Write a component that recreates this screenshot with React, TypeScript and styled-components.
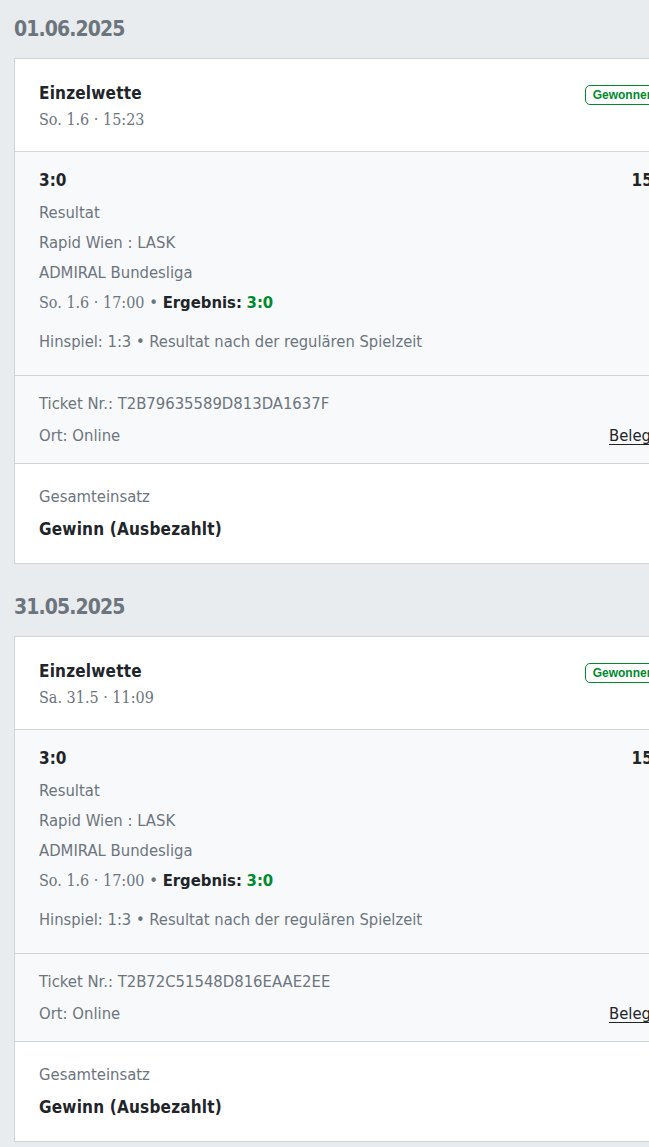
import React from 'react'
import styled, { createGlobalStyle } from 'styled-components'

const GlobalStyle = createGlobalStyle`
    html, body {
        margin: 0;
        padding: 0;
        background: #e9ecef;
        overflow: hidden;
    }
    body {
        font-family: "DejaVu Sans Condensed", "Roboto", sans-serif;
        color: #212529;
    }
`

const Page = styled.div`
    width: 740px;
    padding: 0 14px;
`

const DayHeading = styled.h2`
    margin: 0;
    height: 58px;
    display: flex;
    align-items: center;
    font-size: 21px;
    font-weight: 700;
    letter-spacing: -0.9px;
    color: #6c757d;
    box-sizing: border-box;
`

const DayGroup = styled.section`
    & + & {
        margin-top: 14px;
    }
`

const Card = styled.div`
    width: 694px;
    background: #fff;
    border: 1px solid #ced4da;
`

const Head = styled.div`
    display: flex;
    justify-content: space-between;
    align-items: flex-start;
    padding: 22px 24px 20px;
    border-bottom: 1px solid #ced4da;
`

const Title = styled.div`
    font-size: 17px;
    font-weight: 700;
    line-height: 24px;
    letter-spacing: 0.2px;
`

const Stamp = styled.div`
    margin-top: 4px;
    font-family: "DejaVu Serif Condensed", "Liberation Serif", serif;
    font-size: 16px;
    line-height: 22px;
    color: #6c757d;
`

const Badge = styled.span`
    margin-top: 4px;
    margin-right: 23px;
    font-family: "Liberation Sans", Arial, sans-serif;
    font-size: 12px;
    font-weight: 700;
    line-height: 18px;
    padding: 0 7px;
    color: #008a2e;
    border: 1px solid #008a2e;
    border-radius: 5px;
`

const Section = styled.div<{ $tone: 'light' | 'white'; $pad: string }>`
    padding: ${p => p.$pad};
    background: ${p => (p.$tone === 'light' ? '#f8f9fa' : '#fff')};
    & + & {
        border-top: 1px solid #ced4da;
    }
`

const Row = styled.div`
    display: flex;
    justify-content: space-between;
    align-items: baseline;
`

const PickRow = styled(Row)`
    margin-bottom: 6px;
`

const Pick = styled.div`
    font-size: 17px;
    font-weight: 700;
    line-height: 24px;
`

const Odds = styled.div`
    font-size: 17px;
    font-weight: 700;
    line-height: 24px;
    margin-right: 5px;
`

const Line = styled.div<{ $h?: number }>`
    font-size: 16.5px;
    line-height: ${p => p.$h ?? 30}px;
    color: #6c757d;
`

const SmallLine = styled.div`
    margin-top: 12px;
    font-size: 16.4px;
    line-height: 24px;
    color: #6c757d;
`

const Strong = styled.b`
    color: #212529;
`

const Score = styled.b`
    color: #008a2e;
`

const Serif = styled.span`
    font-family: "DejaVu Serif Condensed", "Liberation Serif", serif;
    font-size: 16px;
`

const Link = styled.a`
    font-size: 16.5px;
    color: #212529;
    text-decoration: underline;
    text-underline-offset: 3px;
    margin-right: 34px;
`

const Total = styled.div`
    font-size: 17px;
    font-weight: 700;
    line-height: 32px;
    letter-spacing: 0.2px;
`

type Bet = {
  day: string
  placed: string
  ticket: string
}

const bets: Bet[] = [
  { day: '01.06.2025', placed: 'So. 1.6 · 15:23', ticket: 'T2B79635589D813DA1637F' },
  { day: '31.05.2025', placed: 'Sa. 31.5 · 11:09', ticket: 'T2B72C51548D816EAAE2EE' },
]

const BetCard = ({ bet }: { bet: Bet }) => (
  <Card>
    <Head>
      <div>
        <Title>Einzelwette</Title>
        <Stamp>{bet.placed}</Stamp>
      </div>
      <Badge>Gewonnen</Badge>
    </Head>
    <Section $tone="light" $pad="16px 24px 21px">
      <PickRow>
        <Pick>3:0</Pick>
        <Odds>15,00</Odds>
      </PickRow>
      <Line>Resultat</Line>
      <Line>Rapid Wien : LASK</Line>
      <Line>ADMIRAL Bundesliga</Line>
      <Line>
        <Serif>So. 1.6 · 17:00</Serif> • <Strong>Ergebnis:</Strong> <Score>3:0</Score>
      </Line>
      <SmallLine>Hinspiel: 1:3 • Resultat nach der regulären Spielzeit</SmallLine>
    </Section>
    <Section $tone="light" $pad="12px 24px 11px">
      <Line $h={32}>Ticket Nr.: {bet.ticket}</Line>
      <Row>
        <Line $h={32}>Ort: Online</Line>
        <Link>Beleg</Link>
      </Row>
    </Section>
    <Section $tone="white" $pad="17px 24px 18px">
      <Line $h={32}>Gesamteinsatz</Line>
      <Total>Gewinn (Ausbezahlt)</Total>
    </Section>
  </Card>
)

export default function App() {
  return (
    <Page>
      <GlobalStyle />
      {bets.map(bet => (
        <DayGroup key={bet.ticket}>
          <DayHeading>{bet.day}</DayHeading>
          <BetCard bet={bet} />
        </DayGroup>
      ))}
    </Page>
  )
}
